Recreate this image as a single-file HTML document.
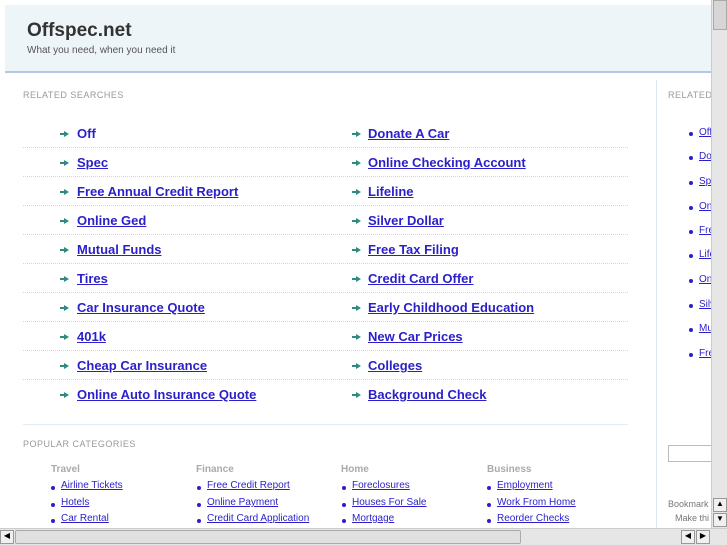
<!DOCTYPE html><html><head><style>
*{margin:0;padding:0;box-sizing:border-box}
body{width:727px;height:545px;overflow:hidden;background:#fff;font-family:"Liberation Sans",sans-serif;position:relative}
.hdr{position:absolute;left:5px;top:5px;width:706px;height:68px;background:#eef5f8;border-bottom:2px solid #b3c8e6}
.hdr h1{position:absolute;left:22px;top:15px;font-size:19px;color:#333;font-weight:bold}
.hdr p{position:absolute;left:22px;top:40px;font-size:10px;color:#555}
.lbl{position:absolute;font-size:9px;color:#999;letter-spacing:.5px}
.row{position:absolute;left:23px;width:605px;height:29px;border-bottom:1px dotted #c6d9f0}
.row a{position:absolute;top:7px;font-size:13px;font-weight:bold;color:#2a1fc9;text-decoration:underline}
.row i{position:absolute;top:12px;width:0;height:0;border-left:5px solid #2f8a80;border-top:3px solid transparent;border-bottom:3px solid transparent}
.row i:before{content:"";position:absolute;left:-9px;top:-1px;width:4px;height:2px;background:#2f8a80}
.cat{position:absolute;top:463px;font-size:10px;font-weight:bold;color:#aaa}
.cl{position:absolute;font-size:10px;color:#2a1fc9;text-decoration:underline}
.cl:before{content:"";position:absolute;left:-10px;top:6px;width:4px;height:4px;border-radius:2px;background:#2a1fc9}
.side{position:absolute;left:656px;top:80px;width:1px;height:450px;background:#dde6f2}
.sl{position:absolute;left:699px;font-size:10px;color:#2a1fc9;text-decoration:underline}
.sl:before{content:"";position:absolute;left:-10px;top:5px;width:4px;height:4px;border-radius:2px;background:#2a1fc9}
.vs{position:absolute;left:711px;top:0;width:16px;height:528px;background:#e6e6e6;border-left:1px solid #ccc}
.hs{position:absolute;left:0;top:528px;width:727px;height:17px;background:#e6e6e6;border-top:1px solid #ccc}
</style></head><body>
<div class="hdr"><h1>Offspec.net</h1><p>What you need, when you need it</p></div>
<div class="lbl" style="left:23px;top:90px">RELATED SEARCHES</div>
<div class="row" style="top:119px"><i style="left:41px"></i><a style="left:54px;text-decoration:none">Off</a><i style="left:333px"></i><a style="left:345px">Donate A Car</a></div>
<div class="row" style="top:148px"><i style="left:41px"></i><a style="left:54px">Spec</a><i style="left:333px"></i><a style="left:345px">Online Checking Account</a></div>
<div class="row" style="top:177px"><i style="left:41px"></i><a style="left:54px">Free Annual Credit Report</a><i style="left:333px"></i><a style="left:345px">Lifeline</a></div>
<div class="row" style="top:206px"><i style="left:41px"></i><a style="left:54px">Online Ged</a><i style="left:333px"></i><a style="left:345px">Silver Dollar</a></div>
<div class="row" style="top:235px"><i style="left:41px"></i><a style="left:54px">Mutual Funds</a><i style="left:333px"></i><a style="left:345px">Free Tax Filing</a></div>
<div class="row" style="top:264px"><i style="left:41px"></i><a style="left:54px">Tires</a><i style="left:333px"></i><a style="left:345px">Credit Card Offer</a></div>
<div class="row" style="top:293px"><i style="left:41px"></i><a style="left:54px">Car Insurance Quote</a><i style="left:333px"></i><a style="left:345px">Early Childhood Education</a></div>
<div class="row" style="top:322px"><i style="left:41px"></i><a style="left:54px">401k</a><i style="left:333px"></i><a style="left:345px">New Car Prices</a></div>
<div class="row" style="top:351px"><i style="left:41px"></i><a style="left:54px">Cheap Car Insurance</a><i style="left:333px"></i><a style="left:345px">Colleges</a></div>
<div class="row" style="top:380px;height:45px;border-bottom:1px solid #e3ebf5"><i style="left:41px"></i><a style="left:54px">Online Auto Insurance Quote</a><i style="left:333px"></i><a style="left:345px">Background Check</a></div>
<div class="lbl" style="left:23px;top:439px">POPULAR CATEGORIES</div>
<div class="cat" style="left:51px;top:464px">Travel</div><div class="cat" style="left:196px;top:464px">Finance</div><div class="cat" style="left:341px;top:464px">Home</div><div class="cat" style="left:487px;top:464px">Business</div>
<a class="cl" style="left:61px;top:480px">Airline Tickets</a><a class="cl" style="left:61px;top:497px">Hotels</a><a class="cl" style="left:61px;top:513px">Car Rental</a>
<a class="cl" style="left:207px;top:480px">Free Credit Report</a><a class="cl" style="left:207px;top:497px">Online Payment</a><a class="cl" style="left:207px;top:513px">Credit Card Application</a>
<a class="cl" style="left:352px;top:480px">Foreclosures</a><a class="cl" style="left:352px;top:497px">Houses For Sale</a><a class="cl" style="left:352px;top:513px">Mortgage</a>
<a class="cl" style="left:497px;top:480px">Employment</a><a class="cl" style="left:497px;top:497px">Work From Home</a><a class="cl" style="left:497px;top:513px">Reorder Checks</a>
<div class="side"></div>
<div class="lbl" style="left:668px;top:90px">RELATED</div>
<a class="sl" style="top:127px">Off</a><a class="sl" style="top:151px">Do</a><a class="sl" style="top:176px">Sp</a><a class="sl" style="top:201px">On</a><a class="sl" style="top:225px">Fre</a><a class="sl" style="top:249px">Life</a><a class="sl" style="top:274px">On</a><a class="sl" style="top:299px">Silv</a><a class="sl" style="top:323px">Mu</a><a class="sl" style="top:348px">Fre</a>
<div style="position:absolute;left:668px;top:445px;width:45px;height:17px;border:1px solid #bbb"></div>
<div style="position:absolute;left:668px;top:499px;font-size:9px;color:#777">Bookmark</div>
<div style="position:absolute;left:675px;top:513px;font-size:9px;color:#777">Make thi</div>
<div class="vs"><div style="position:absolute;left:1px;top:0;width:14px;height:30px;background:#d6d6d6;border:1px solid #aaa"></div><div style="position:absolute;left:1px;top:498px;width:14px;height:14px;background:#f0f0f0;border:1px solid #999;font-size:8px;text-align:center">▲</div><div style="position:absolute;left:1px;top:513px;width:14px;height:14px;background:#f0f0f0;border:1px solid #999;font-size:8px;text-align:center">▼</div></div>
<div class="hs"><div style="position:absolute;left:0;top:1px;width:14px;height:14px;background:#f0f0f0;border:1px solid #999;font-size:8px;text-align:center">◀</div><div style="position:absolute;left:15px;top:1px;width:506px;height:14px;background:#e0e0e0;border:1px solid #aaa;border-radius:2px"></div><div style="position:absolute;left:681px;top:1px;width:14px;height:14px;background:#f0f0f0;border:1px solid #999;font-size:8px;text-align:center">◀</div><div style="position:absolute;left:696px;top:1px;width:14px;height:14px;background:#f0f0f0;border:1px solid #999;font-size:8px;text-align:center">▶</div></div>
</body></html>
